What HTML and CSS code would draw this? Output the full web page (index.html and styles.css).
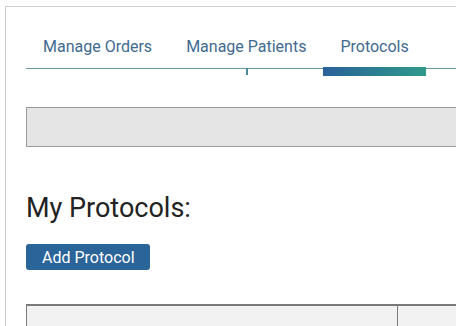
FILE: index.html
```html
<!DOCTYPE html>
<html lang="en">
<head>
  <meta charset="UTF-8">
  <title>Protocols</title>
  <link rel="stylesheet" href="styles.css">
</head>
<body>
  <div class="frame">
    <ul class="tabs">
      <li class="tab">Manage Orders</li>
      <li class="tab hovered">Manage Patients</li>
      <li class="tab active">Protocols</li>
      <li class="tab-fill"></li>
    </ul>

    <div class="search-bar"></div>

    <h2 class="page-title">My Protocols:</h2>
    <button class="btn-primary">Add Protocol</button>

    <table class="protocol-table">
      <tr>
        <th class="col-name"></th>
        <th class="col-actions"></th>
      </tr>
    </table>
  </div>
</body>
</html>
```

FILE: styles.css
```css
html, body {
  margin: 0;
  overflow: hidden;
  background: #fff;
  font-family: Roboto, "Liberation Sans", Arial, sans-serif;
}
.frame {
  margin: 6px 0 0 5px;
  width: 640px;
  height: 400px;
  border-left: 1px solid #cfcfcf;
  border-top: 1px solid #cfcfcf;
  padding-left: 20px;
}
.tabs {
  display: flex;
  list-style: none;
  margin: 0;
  padding: 0;
  border-bottom: 1px solid #6e9a9c;
}
.tab {
  position: relative;
  padding: 30px 17px 11px 17px;
  font-size: 16px;
  line-height: 20px;
  color: #3f6a90;
}
.tab.active::after {
  content: "";
  position: absolute;
  left: 0;
  right: 0;
  top: 100%;
  margin-top: -1px;
  height: 9px;
  background: linear-gradient(to right, #2a6199, #2f9a8c);
}
.tab.hovered::after {
  content: "";
  position: absolute;
  left: 50%;
  top: 100%;
  width: 2px;
  height: 7px;
  background: #4e8a9e;
}
.search-bar {
  margin-top: 38px;
  height: 38px;
  border: 1px solid #9a9a9a;
  background: #e6e5e5;
}
.page-title {
  margin: 46px 0 0 0;
  font-size: 27px;
  line-height: 31px;
  font-weight: normal;
  color: #222;
}
.btn-primary {
  display: block;
  margin-top: 20px;
  height: 26px;
  padding: 0 15px 0 16px;
  border: none;
  border-radius: 3px;
  background: #2b6498;
  color: #fff;
  font-family: inherit;
  font-size: 16px;
}
.protocol-table {
  margin-top: 34px;
  width: 600px;
  border-collapse: collapse;
  background: #f2f2f2;
}
.protocol-table th {
  height: 40px;
  border-top: 2px solid #7a7a7a;
  border-left: 1px solid #7a7a7a;
  padding: 0;
}
.col-name {
  width: 370px;
}
```
